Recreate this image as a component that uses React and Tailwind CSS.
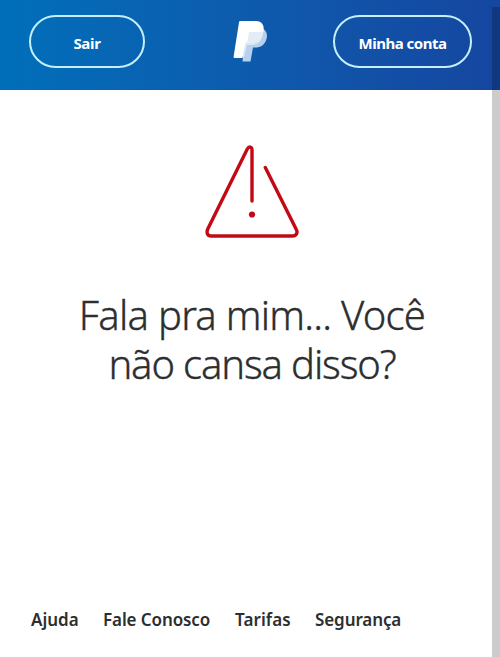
import React from 'react';

const FOOTER_LINKS = [
    { label: 'Ajuda', className: 'w-[47px]' },
    { label: 'Fale Conosco', className: 'w-[107px] tracking-[-0.1px]' },
    { label: 'Tarifas', className: 'w-[55px] tracking-[0.1px]' },
    { label: 'Segurança', className: 'w-[85px] tracking-[-0.1px]' },
];

const Logo = () => (
    <svg className="h-[42px] w-[35px]" viewBox="0 0 35 42" fill="none">
        <path d="M13 8H29C33 10 35 14 33.5 19C32 25 27.500 27.500 22 27.500H20L17.500 41.500H9.500L10 36Z" fill="#b5d1ee" />
        <path d="M14 11H29.500C31 19 26 25 18 25H14L11 37H9.500Z" fill="#dbe7f5" />
        <path d="M7.500 1H23C28.500 1 31.500 5 30.500 11C29 19 24 22.500 17 22.500H12.500L9.500 38H1.500C.8 38 .5 37.500 .6 36.800L6 2.300C6.100 1.400 6.600 1 7.500 1Z" fill="#fff" />
        <path d="M16 12H30C28.500 19 24 22.500 17 22.500H14Z" fill="#e4edf6" />
    </svg>
);

const WarningIcon = () => (
    <svg className="h-[96px] w-[96px]" viewBox="0 0 96 96" fill="none">
        <path
            d="M48 57V6C48 2.500 45 2 43.300 5L4 84.500C2 88.500 3.500 92 7 92H88.500C92.500 92 94 88.500 92.300 85.500L61.300 23.500"
            stroke="#c20a16"
            strokeWidth="3.4"
            strokeLinecap="round"
            strokeLinejoin="round"
        />
        <circle cx="48" cy="70.500" r="3.100" fill="#c20a16" />
    </svg>
);

const App = () => {
    return (
        <div className="relative flex h-[657px] w-[500px] flex-col overflow-hidden bg-white font-['Noto_Sans',sans-serif]">
            <header className="flex h-[90px] shrink-0 items-start justify-between bg-linear-to-r from-[#006fba] to-[#1546a0] pt-[15px] pr-7 pl-[29px]">
                <button className="flex h-[53px] w-[116px] items-center justify-center rounded-full border-2 border-[#c5f0fb] pt-1 text-[15px] font-bold tracking-[-0.3px] text-white">
                    Sair
                </button>
                <div className="mt-[5px] flex-1 pl-[88px]">
                    <Logo />
                </div>
                <button className="flex h-[53px] w-[139px] items-center justify-center rounded-full border-2 border-[#c5f0fb] pt-1 text-[15px] font-bold tracking-[-0.5px] whitespace-nowrap text-white">
                    Minha conta
                </button>
            </header>

            <main className="flex flex-1 flex-col items-center pt-[54px] pl-1">
                <WarningIcon />
                <h1 className="mt-[50px] text-center text-[40px] leading-[49px] font-light whitespace-nowrap text-[#2c2e2f] [-webkit-text-stroke:0.35px_#2c2e2f]">
                    <span className="block tracking-[-0.75px]">Fala pra mim... Você</span>
                    <span className="block tracking-[-1.15px]">não cansa disso?</span>
                </h1>
            </main>

            <footer className="flex h-[51px] shrink-0 gap-[25px] pl-[31px] text-[17px] leading-7 font-semibold whitespace-nowrap text-[#2c2e2f]">
                {FOOTER_LINKS.map((link) => (
                    <a key={link.label} href="#" className={link.className}>
                        {link.label}
                    </a>
                ))}
            </footer>

            <div className="absolute top-[7px] right-0 bottom-0 w-2 bg-black/20" />
        </div>
    );
};

export default App;
